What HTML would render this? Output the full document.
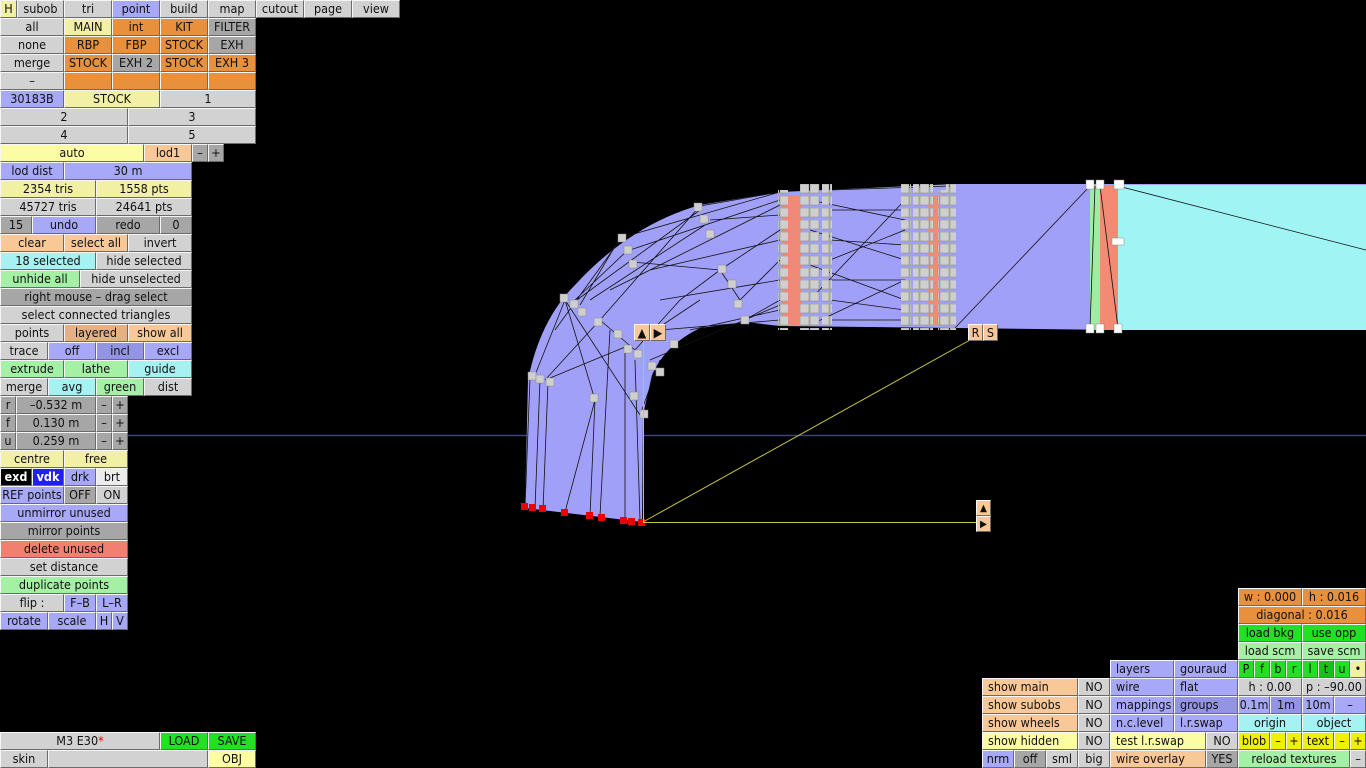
<!DOCTYPE html>
<html><head><meta charset="utf-8"><style>
body{margin:0;width:1366px;height:768px;background:#000;position:relative;overflow:hidden;font-family:"DejaVu Sans Condensed","Liberation Sans",sans-serif;font-size:12.5px;color:#111}
.b{position:absolute;height:18px;box-sizing:border-box;border:1px solid;border-color:#f6f6f6 #6a6a6a #6a6a6a #f6f6f6;text-align:center;line-height:16px;white-space:nowrap;overflow:hidden;background:#d2d2d2}
.g{background:#d2d2d2}.d{background:#a6a6a6}.o{background:#e8903c}.y{background:#f2f0a4}.u{background:#a8a8f8}.ud{background:#9494e4}.p{background:#f8c898}.pd{background:#e4b084}.c{background:#a6f2f2}.n{background:#a4f0a4}.N{background:#22e022}.Y{background:#f0f000}.s{background:#f28070}.l{text-align:left;padding-left:5px}
</style></head><body>
<svg width="1366" height="768" style="position:absolute;left:0;top:0">
<defs><pattern id="v" width="10" height="12" patternUnits="userSpaceOnUse" y="184"><rect width="9" height="9" fill="#cfcfcf" stroke="#888" stroke-width="0.5"/></pattern></defs>
<line x1="128" y1="435.5" x2="1366" y2="435.5" stroke="#3a3aa8" stroke-width="1.5"/>
<path d="M525,508 L528,380 Q540,320 575,285 Q630,225 700,205 L780,192 L955,184 L1366,184 L1366,330 L1118,330 L955,328 L780,326 L745,322 L700,328 Q665,345 652,375 L643,415 L642,522 Z" fill="#a0a0f8"/>
<rect x="1118" y="185" width="248" height="145" fill="#a0f4f4"/>
<rect x="1090" y="185" width="10" height="145" fill="#a0eca0"/>
<rect x="1100" y="185" width="18" height="145" fill="#f28a74"/>
<rect x="782" y="195" width="20" height="130" fill="#f08a78"/>
<rect x="928" y="195" width="12" height="130" fill="#f08a78"/>
<g stroke="#111" stroke-width="0.8" fill="none">
<path d="M955,328 L1090,186 M1095,186 L1090,328 M1100,186 L1118,328 M1118,186 L1366,250"/>
<path d="M530,378 L525,508 M540,380 L535,508 M548,382 L543,510 M565,300 L595,400 L565,512 M595,400 L590,516 M610,330 L600,516 M625,345 L625,520 M635,360 L640,520 M565,300 L640,415 M580,305 L620,238 M600,320 L700,206 M620,238 L780,192 M630,250 L780,200 M700,206 L780,192 M720,270 L780,230 M740,300 L780,260 M745,320 L780,300 M690,330 L780,310 M600,320 L635,350 L680,300 L720,270 L740,300 M640,415 L660,360 M710,220 L780,215 M632,262 L720,270 M545,380 L600,320 M555,330 L620,240 M535,375 L565,300 M570,305 L700,210 M590,300 L705,225 M610,290 L780,205 M650,270 L780,240 M660,300 L780,280 M660,330 L780,320 M640,340 L700,300 M650,360 L780,305 M550,378 L630,345 M575,300 L630,248"/>
<path d="M810,200 L905,220 M810,230 L905,260 M810,265 L905,300 M810,300 L905,200 M810,325 L905,280 M830,190 L950,186 M830,240 L905,245 M830,280 L905,280 M830,320 L905,320 M830,210 L905,210 M830,260 L905,230 M830,300 L905,310"/>
</g>
<rect x="778" y="190" width="10" height="140" fill="url(#v)"/>
<rect x="800" y="184" width="10" height="146" fill="url(#v)"/>
<rect x="810" y="184" width="10" height="146" fill="url(#v)"/>
<rect x="822" y="184" width="10" height="146" fill="url(#v)"/>
<rect x="901" y="184" width="10" height="146" fill="url(#v)"/>
<rect x="913" y="184" width="10" height="146" fill="url(#v)"/>
<rect x="923" y="184" width="10" height="146" fill="url(#v)"/>
<rect x="938" y="190" width="10" height="140" fill="url(#v)"/>
<rect x="946" y="184" width="10" height="146" fill="url(#v)"/>
<g fill="#cfcfcf" stroke="#888" stroke-width="0.5">
<rect x="694" y="203" width="8" height="8"/><rect x="700" y="215" width="8" height="8"/><rect x="706" y="230" width="8" height="8"/><rect x="718" y="265" width="8" height="8"/><rect x="728" y="280" width="8" height="8"/><rect x="741" y="316" width="8" height="8"/><rect x="734" y="300" width="8" height="8"/>
<rect x="618" y="234" width="8" height="8"/><rect x="624" y="246" width="8" height="8"/><rect x="629" y="260" width="8" height="8"/>
<rect x="560" y="294" width="8" height="8"/><rect x="570" y="300" width="8" height="8"/><rect x="578" y="308" width="8" height="8"/><rect x="594" y="318" width="8" height="8"/><rect x="614" y="330" width="8" height="8"/><rect x="624" y="345" width="8" height="8"/><rect x="634" y="350" width="8" height="8"/><rect x="648" y="362" width="8" height="8"/><rect x="656" y="368" width="8" height="8"/><rect x="630" y="392" width="8" height="8"/><rect x="640" y="410" width="8" height="8"/><rect x="670" y="340" width="8" height="8"/><rect x="590" y="394" width="8" height="8"/>
<rect x="528" y="372" width="8" height="8"/><rect x="536" y="375" width="8" height="8"/><rect x="546" y="378" width="8" height="8"/>
<rect x="1086" y="180" width="8" height="9" fill="#fff"/><rect x="1096" y="180" width="8" height="9" fill="#fff"/><rect x="1114" y="180" width="10" height="9" fill="#fff"/><rect x="1112" y="238" width="12" height="7" fill="#fff"/><rect x="1086" y="324" width="8" height="9" fill="#fff"/><rect x="1096" y="324" width="8" height="9" fill="#fff"/><rect x="1114" y="324" width="8" height="9" fill="#fff"/>
</g>
<g fill="#ee0000"><rect x="521" y="503" width="7" height="7"/><rect x="529" y="504" width="7" height="7"/><rect x="539" y="505" width="7" height="7"/><rect x="561" y="509" width="7" height="7"/><rect x="586" y="512" width="7" height="7"/><rect x="598" y="514" width="7" height="7"/><rect x="620" y="517" width="7" height="7"/><rect x="628" y="518" width="7" height="7"/><rect x="638" y="519" width="7" height="7"/></g>
<g stroke="#c8c840" stroke-width="1"><line x1="643" y1="522" x2="970" y2="340"/><line x1="643" y1="522.5" x2="976" y2="522.5"/><line x1="643.5" y1="338" x2="643.5" y2="522"/></g>
</svg>
<div class="b p" style="left:634px;top:324px;width:16px;height:17px">▲</div><div class="b p" style="left:650px;top:324px;width:16px;height:17px">▶</div>
<div class="b p" style="left:968px;top:324px;width:15px;height:17px">R</div><div class="b p" style="left:983px;top:324px;width:15px;height:17px">S</div>
<div class="b p" style="left:976px;top:500px;width:15px;height:16px;font-size:10px">▲</div><div class="b p" style="left:976px;top:516px;width:15px;height:16px;font-size:10px">▶</div>

<div class="b y" style="left:0;top:0;width:17px">H</div><div class="b" style="left:17px;top:0;width:47px">subob</div><div class="b" style="left:64px;top:0;width:48px">tri</div><div class="b u" style="left:112px;top:0;width:48px">point</div><div class="b" style="left:160px;top:0;width:48px">build</div><div class="b" style="left:208px;top:0;width:48px">map</div><div class="b" style="left:256px;top:0;width:48px">cutout</div><div class="b" style="left:304px;top:0;width:48px">page</div><div class="b" style="left:352px;top:0;width:48px">view</div>
<div class="b" style="left:0;top:18px;width:64px">all</div><div class="b y" style="left:64px;top:18px;width:48px">MAIN</div><div class="b o" style="left:112px;top:18px;width:48px">int</div><div class="b o" style="left:160px;top:18px;width:48px">KIT</div><div class="b d" style="left:208px;top:18px;width:48px">FILTER</div>
<div class="b" style="left:0;top:36px;width:64px">none</div><div class="b o" style="left:64px;top:36px;width:48px">RBP</div><div class="b o" style="left:112px;top:36px;width:48px">FBP</div><div class="b o" style="left:160px;top:36px;width:48px">STOCK</div><div class="b d" style="left:208px;top:36px;width:48px">EXH</div>
<div class="b" style="left:0;top:54px;width:64px">merge</div><div class="b o" style="left:64px;top:54px;width:48px">STOCK</div><div class="b d" style="left:112px;top:54px;width:48px">EXH 2</div><div class="b o" style="left:160px;top:54px;width:48px">STOCK</div><div class="b o" style="left:208px;top:54px;width:48px">EXH 3</div>
<div class="b" style="left:0;top:72px;width:64px">–</div><div class="b o" style="left:64px;top:72px;width:48px"></div><div class="b o" style="left:112px;top:72px;width:48px"></div><div class="b o" style="left:160px;top:72px;width:48px"></div><div class="b o" style="left:208px;top:72px;width:48px"></div>
<div class="b u" style="left:0;top:90px;width:64px">30183B</div><div class="b y" style="left:64px;top:90px;width:96px">STOCK</div><div class="b" style="left:160px;top:90px;width:96px">1</div>
<div class="b" style="left:0;top:108px;width:128px">2</div><div class="b" style="left:128px;top:108px;width:128px">3</div>
<div class="b" style="left:0;top:126px;width:128px">4</div><div class="b" style="left:128px;top:126px;width:128px">5</div>
<div class="b y" style="left:0;top:144px;width:144px;background:#fcfca4">auto</div><div class="b p" style="left:144px;top:144px;width:48px">lod1</div><div class="b d" style="left:192px;top:144px;width:16px">–</div><div class="b d" style="left:208px;top:144px;width:16px">+</div>
<div class="b u" style="left:0;top:162px;width:64px">lod dist</div><div class="b u" style="left:64px;top:162px;width:128px">30 m</div>
<div class="b y" style="left:0;top:180px;width:96px">2354 tris</div><div class="b y" style="left:96px;top:180px;width:96px">1558 pts</div>
<div class="b" style="left:0;top:198px;width:96px">45727 tris</div><div class="b" style="left:96px;top:198px;width:96px">24641 pts</div>
<div class="b d" style="left:0;top:216px;width:32px">15</div><div class="b u" style="left:32px;top:216px;width:64px">undo</div><div class="b d" style="left:96px;top:216px;width:64px">redo</div><div class="b d" style="left:160px;top:216px;width:32px">0</div>
<div class="b p" style="left:0;top:234px;width:64px">clear</div><div class="b p" style="left:64px;top:234px;width:64px">select all</div><div class="b" style="left:128px;top:234px;width:64px">invert</div>
<div class="b c" style="left:0;top:252px;width:96px">18 selected</div><div class="b" style="left:96px;top:252px;width:96px">hide selected</div>
<div class="b n" style="left:0;top:270px;width:80px">unhide all</div><div class="b" style="left:80px;top:270px;width:112px">hide unselected</div>
<div class="b d" style="left:0;top:288px;width:192px">right mouse – drag select</div>
<div class="b" style="left:0;top:306px;width:192px">select connected triangles</div>
<div class="b" style="left:0;top:324px;width:64px">points</div><div class="b pd" style="left:64px;top:324px;width:64px">layered</div><div class="b p" style="left:128px;top:324px;width:64px">show all</div>
<div class="b" style="left:0;top:342px;width:48px">trace</div><div class="b u" style="left:48px;top:342px;width:48px">off</div><div class="b ud" style="left:96px;top:342px;width:48px">incl</div><div class="b u" style="left:144px;top:342px;width:48px">excl</div>
<div class="b n" style="left:0;top:360px;width:64px">extrude</div><div class="b n" style="left:64px;top:360px;width:64px">lathe</div><div class="b c" style="left:128px;top:360px;width:64px">guide</div>
<div class="b" style="left:0;top:378px;width:48px">merge</div><div class="b c" style="left:48px;top:378px;width:48px">avg</div><div class="b n" style="left:96px;top:378px;width:48px">green</div><div class="b" style="left:144px;top:378px;width:48px">dist</div>
<div class="b d" style="left:0;top:396px;width:16px">r</div><div class="b d" style="left:16px;top:396px;width:80px">–0.532 m</div><div class="b d" style="left:96px;top:396px;width:16px">–</div><div class="b d" style="left:112px;top:396px;width:16px">+</div>
<div class="b d" style="left:0;top:414px;width:16px">f</div><div class="b d" style="left:16px;top:414px;width:80px">0.130 m</div><div class="b d" style="left:96px;top:414px;width:16px">–</div><div class="b d" style="left:112px;top:414px;width:16px">+</div>
<div class="b d" style="left:0;top:432px;width:16px">u</div><div class="b d" style="left:16px;top:432px;width:80px">0.259 m</div><div class="b d" style="left:96px;top:432px;width:16px">–</div><div class="b d" style="left:112px;top:432px;width:16px">+</div>
<div class="b y" style="left:0;top:450px;width:64px">centre</div><div class="b y" style="left:64px;top:450px;width:64px">free</div>
<div class="b" style="left:0;top:468px;width:32px;background:#000;color:#fff;font-weight:bold">exd</div><div class="b" style="left:32px;top:468px;width:32px;background:#2020f0;color:#fff;font-weight:bold">vdk</div><div class="b u" style="left:64px;top:468px;width:32px">drk</div><div class="b" style="left:96px;top:468px;width:32px;background:#ececec">brt</div>
<div class="b u" style="left:0;top:486px;width:64px">REF points</div><div class="b d" style="left:64px;top:486px;width:32px">OFF</div><div class="b" style="left:96px;top:486px;width:32px">ON</div>
<div class="b u" style="left:0;top:504px;width:128px">unmirror unused</div>
<div class="b d" style="left:0;top:522px;width:128px">mirror points</div>
<div class="b s" style="left:0;top:540px;width:128px">delete unused</div>
<div class="b" style="left:0;top:558px;width:128px">set distance</div>
<div class="b n" style="left:0;top:576px;width:128px">duplicate points</div>
<div class="b" style="left:0;top:594px;width:64px">flip :</div><div class="b u" style="left:64px;top:594px;width:32px">F–B</div><div class="b u" style="left:96px;top:594px;width:32px">L–R</div>
<div class="b u" style="left:0;top:612px;width:48px">rotate</div><div class="b u" style="left:48px;top:612px;width:48px">scale</div><div class="b u" style="left:96px;top:612px;width:16px">H</div><div class="b u" style="left:112px;top:612px;width:16px">V</div>

<div class="b" style="left:0;top:732px;width:160px">M3 E30<span style="color:#e00">*</span></div><div class="b N" style="left:160px;top:732px;width:48px">LOAD</div><div class="b N" style="left:208px;top:732px;width:48px">SAVE</div>
<div class="b" style="left:0;top:750px;width:48px">skin</div><div class="b" style="left:48px;top:750px;width:160px"></div><div class="b y" style="left:208px;top:750px;width:48px;background:#fcfca4">OBJ</div>

<div class="b o" style="left:1238px;top:588px;width:64px">w : 0.000</div><div class="b o" style="left:1302px;top:588px;width:64px">h : 0.016</div>
<div class="b o" style="left:1238px;top:606px;width:128px">diagonal : 0.016</div>
<div class="b N" style="left:1238px;top:624px;width:64px">load bkg</div><div class="b N" style="left:1302px;top:624px;width:64px">use opp</div>
<div class="b n" style="left:1238px;top:642px;width:64px">load scm</div><div class="b n" style="left:1302px;top:642px;width:64px">save scm</div>
<div class="b N" style="left:1238px;top:660px;width:16px">P</div><div class="b N" style="left:1254px;top:660px;width:16px">f</div><div class="b N" style="left:1270px;top:660px;width:16px">b</div><div class="b N" style="left:1286px;top:660px;width:16px">r</div><div class="b N" style="left:1302px;top:660px;width:16px">l</div><div class="b" style="left:1318px;top:660px;width:16px;background:#18c018">t</div><div class="b N" style="left:1334px;top:660px;width:16px">u</div><div class="b y" style="left:1350px;top:660px;width:16px">•</div>
<div class="b u l" style="left:1110px;top:660px;width:64px">layers</div><div class="b u l" style="left:1174px;top:660px;width:64px">gouraud</div>
<div class="b p l" style="left:982px;top:678px;width:96px">show main</div><div class="b" style="left:1078px;top:678px;width:32px">NO</div><div class="b u l" style="left:1110px;top:678px;width:64px">wire</div><div class="b u l" style="left:1174px;top:678px;width:64px">flat</div><div class="b" style="left:1238px;top:678px;width:64px">h : 0.00</div><div class="b" style="left:1302px;top:678px;width:64px">p : –90.00</div>
<div class="b p l" style="left:982px;top:696px;width:96px">show subobs</div><div class="b" style="left:1078px;top:696px;width:32px">NO</div><div class="b u l" style="left:1110px;top:696px;width:64px">mappings</div><div class="b ud l" style="left:1174px;top:696px;width:64px">groups</div><div class="b u" style="left:1238px;top:696px;width:32px">0.1m</div><div class="b ud" style="left:1270px;top:696px;width:32px">1m</div><div class="b u" style="left:1302px;top:696px;width:32px">10m</div><div class="b u" style="left:1334px;top:696px;width:32px">–</div>
<div class="b p l" style="left:982px;top:714px;width:96px">show wheels</div><div class="b" style="left:1078px;top:714px;width:32px">NO</div><div class="b u l" style="left:1110px;top:714px;width:64px">n.c.level</div><div class="b u l" style="left:1174px;top:714px;width:64px">l.r.swap</div><div class="b c" style="left:1238px;top:714px;width:64px">origin</div><div class="b c" style="left:1302px;top:714px;width:64px">object</div>
<div class="b y l" style="left:982px;top:732px;width:96px;background:#fcfca4">show hidden</div><div class="b" style="left:1078px;top:732px;width:32px">NO</div><div class="b y l" style="left:1110px;top:732px;width:96px;background:#fcfca4">test l.r.swap</div><div class="b" style="left:1206px;top:732px;width:32px">NO</div><div class="b Y" style="left:1238px;top:732px;width:32px">blob</div><div class="b Y" style="left:1270px;top:732px;width:16px">–</div><div class="b Y" style="left:1286px;top:732px;width:16px">+</div><div class="b Y" style="left:1302px;top:732px;width:32px">text</div><div class="b Y" style="left:1334px;top:732px;width:16px">–</div><div class="b Y" style="left:1350px;top:732px;width:16px">+</div>
<div class="b u" style="left:982px;top:750px;width:32px">nrm</div><div class="b d" style="left:1014px;top:750px;width:32px">off</div><div class="b" style="left:1046px;top:750px;width:32px">sml</div><div class="b" style="left:1078px;top:750px;width:32px">big</div><div class="b p l" style="left:1110px;top:750px;width:96px">wire overlay</div><div class="b d" style="left:1206px;top:750px;width:32px">YES</div><div class="b n" style="left:1238px;top:750px;width:112px">reload textures</div><div class="b" style="left:1350px;top:750px;width:16px">–</div>
</body></html>
